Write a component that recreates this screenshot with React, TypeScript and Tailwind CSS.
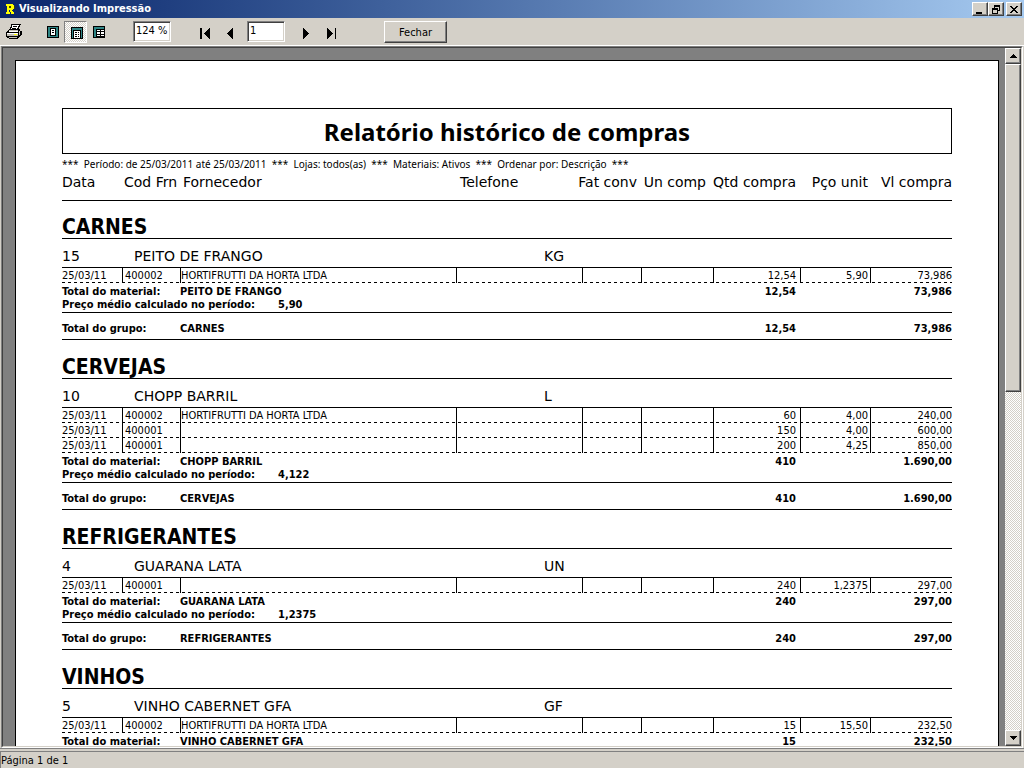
import type { ReactNode } from "react";

type Purchase = { date: string; code: string; supplier: string; qty: string; unit: string; total: string };
type Group = {
  name: string;
  id: string;
  material: string;
  measure: string;
  rows: Purchase[];
  qty: string;
  total: string;
  average?: string;
};

const groups: Group[] = [
  {
    name: "CARNES", id: "15", material: "PEITO DE FRANGO", measure: "KG",
    rows: [{ date: "25/03/11", code: "400002", supplier: "HORTIFRUTTI DA HORTA LTDA", qty: "12,54", unit: "5,90", total: "73,986" }],
    qty: "12,54", total: "73,986", average: "5,90",
  },
  {
    name: "CERVEJAS", id: "10", material: "CHOPP BARRIL", measure: "L",
    rows: [
      { date: "25/03/11", code: "400002", supplier: "HORTIFRUTTI DA HORTA LTDA", qty: "60", unit: "4,00", total: "240,00" },
      { date: "25/03/11", code: "400001", supplier: "", qty: "150", unit: "4,00", total: "600,00" },
      { date: "25/03/11", code: "400001", supplier: "", qty: "200", unit: "4,25", total: "850,00" },
    ],
    qty: "410", total: "1.690,00", average: "4,122",
  },
  {
    name: "REFRIGERANTES", id: "4", material: "GUARANA LATA", measure: "UN",
    rows: [{ date: "25/03/11", code: "400001", supplier: "", qty: "240", unit: "1,2375", total: "297,00" }],
    qty: "240", total: "297,00", average: "1,2375",
  },
  {
    name: "VINHOS", id: "5", material: "VINHO CABERNET GFA", measure: "GF",
    rows: [{ date: "25/03/11", code: "400002", supplier: "HORTIFRUTTI DA HORTA LTDA", qty: "15", unit: "15,50", total: "232,50" }],
    qty: "15", total: "232,50",
  },
];

const raised =
  "border border-t-white border-l-white border-r-[#404040] border-b-[#404040] bg-[#d4d0c8] shadow-[inset_-1px_-1px_0_#808080]";
const sunken =
  "border border-t-[#808080] border-l-[#808080] border-r-white border-b-white bg-white shadow-[inset_1px_1px_0_#404040,inset_-1px_-1px_0_#d4d0c8]";
const dither = "bg-[repeating-conic-gradient(#d4d0c8_0_25%,#fff_0_50%)] bg-[length:2px_2px]";
const wide = "font-['DejaVu_Sans',sans-serif]";

function Pixels({ w, h, children }: { w: number; h: number; children: ReactNode }) {
  return (
    <svg width={w} height={h} viewBox={`0 0 ${w} ${h}`} shapeRendering="crispEdges" aria-hidden="true">
      {children}
    </svg>
  );
}

function CaptionButton({ label, children }: { label: string; children: ReactNode }) {
  return (
    <button aria-label={label} className={`flex h-[14px] w-4 items-center justify-center ${raised}`}>
      {children}
    </button>
  );
}

function TitleBar() {
  return (
    <header className="flex h-[18px] shrink-0 items-center bg-linear-to-r from-[#0a246a] to-[#a6caf0] pr-[2px] pl-[5px]">
      <Pixels w={10} h={10}>
        <path d="M1 0h7v1h1v4H8v1H7v1h1v1h1v2H6V8H5V6H4v2h1v2H1V8h1V2H1z" fill="#ff0" />
        <path d="M4 2h2v2H4zM9 2h1v3H9z" fill="#404000" />
      </Pixels>
      <h1 className="ml-1 flex-1 text-[11px] leading-[18px] font-bold text-white">Visualizando Impressão</h1>
      <div className="flex">
        <CaptionButton label="Minimizar">
          <Pixels w={10} h={9}><path d="M1 7h6v2H1z" /></Pixels>
        </CaptionButton>
        <CaptionButton label="Restaurar">
          <Pixels w={10} h={9}>
            <path d="M3 0h6v6H7V5h1V2H4v1H3zM1 3h6v6H1zM2 5v3h4V5z" fillRule="evenodd" />
          </Pixels>
        </CaptionButton>
        <div className="w-[2px]" />
        <CaptionButton label="Fechar janela">
          <Pixels w={10} h={9}>
            <path d="M1 1h2v1h1v1h2V2h1V1h2v1H8v1H7v1H6v1h1v1h1v1h1v1H7V7H6V6H4v1H3v1H1V7h1V6h1V5h1V4H3V3H2V2H1z" />
          </Pixels>
        </CaptionButton>
      </div>
    </header>
  );
}

function PageFrame({ children }: { children: ReactNode }) {
  return (
    <Pixels w={12} h={12}>
      <path d="M0 0h12v12H0z" />
      <path d="M1 1h10v10H1z" fill="#2f8585" />
      {children}
    </Pixels>
  );
}

function PrinterIcon() {
  return (
    <Pixels w={16} h={15}>
      <path d="M5 0h10v1h-1v2h-1v2h1v1h1v1h1v4h-1v1h-1v1h-1v1h-1v1H3v-1H1v-1H0V8h1V7h1V6h1V5h1V3h1z" />
      <path d="M6 1h7v1h-1v2h-1v1H5V4h1z" fill="#fff" />
      <path d="M7 2h4v1H7zM6 4h4v1H6z" />
      <path d="M3 7h9v1H3zM1 9h11v1H1z" fill="#fff" />
      <path d="M3 6h9v1H3zM1 10h11v2H1zM13 8h1v3h-1zM3 13h8v1H3z" fill="#c0bdb5" />
      <path d="M14 6h1v1h-1zM13 7h1v1h-1z" fill="#d4d0c8" />
      <path d="M8 10h3v1H8z" fill="#ff0" />
    </Pixels>
  );
}

function Toolbar() {
  const tool = "flex h-[22px] w-[23px] items-center justify-center";
  return (
    <div className="flex h-[27px] shrink-0 items-center bg-[#d4d0c8] pl-[2px]">
      <button aria-label="Imprimir" className={tool}>
        <PrinterIcon />
      </button>
      <div className="w-4" />
      <button aria-label="Página inteira" className={tool}>
        <PageFrame>
          <path d="M3 2h6v8H3z" />
          <path d="M4 3h4v6H4z" fill="#fff" />
          <path d="M5 4h2v1H5zM5 6h2v1H5z" />
        </PageFrame>
      </button>
      <button aria-label="Largura da página" aria-pressed="true" className={`${tool} border border-t-[#808080] border-l-[#808080] border-r-white border-b-white pt-[2px] pl-[2px] ${dither}`}>
        <PageFrame>
          <path d="M2 3h8v9H2z" />
          <path d="M3 4h6v7H3z" fill="#fff" />
          <path d="M4 5h2v1H4zM7 5h1v1H7zM4 7h2v1H4zM7 7h1v1H7zM4 9h2v1H4zM7 9h1v1H7z" />
        </PageFrame>
      </button>
      <button aria-label="Zoom 100%" className={tool}>
        <PageFrame>
          <path d="M3 3h9v8H3z" />
          <path d="M4 4h3v1H4zM8 4h3v1H8zM4 6h3v2H4zM8 6h3v2H8zM4 9h3v1H4zM8 9h3v1H8z" fill="#fff" />
        </PageFrame>
      </button>
      <input aria-label="Zoom" defaultValue="124 %" className={`ml-[23px] h-[21px] w-[38px] pb-[2px] pl-[2px] text-[11px] ${sunken}`} />
      <div className="ml-[21px] flex items-center pt-1">
        <button aria-label="Primeira página" className="flex h-4 w-[26px] items-center justify-center">
          <Pixels w={10} h={11}><path d="M0 0h2v11H0zM9 0h1v11H9V10H8V9H7V8H6V7H5V6H4V5h1V4h1V3h1V2h1V1h1z" /></Pixels>
        </button>
        <button aria-label="Página anterior" className="flex h-4 w-6 items-center justify-center">
          <Pixels w={6} h={11}><path d="M5 0h1v11H5V10H4V9H3V8H2V7H1V6H0V5h1V4h1V3h1V2h1V1h1z" /></Pixels>
        </button>
      </div>
      <input aria-label="Página" defaultValue="1" className={`ml-[5px] h-[21px] w-[38px] pb-[2px] pl-[2px] text-[11px] ${sunken}`} />
      <div className="ml-2 flex items-center pt-1">
        <button aria-label="Próxima página" className="flex h-4 w-[26px] items-center justify-center">
          <Pixels w={6} h={11}><path d="M0 0h1v1h1v1h1v1h1v1h1v1h1v1H5v1H4v1H3v1H2v1H1v1H0z" /></Pixels>
        </button>
        <button aria-label="Última página" className="flex h-4 w-6 items-center justify-center">
          <Pixels w={9} h={11}><path d="M8 0h1v11H8zM0 0h1v1h1v1h1v1h1v1h1v1h1v1H5v1H4v1H3v1H2v1H1v1H0z" /></Pixels>
        </button>
      </div>
      <button className={`ml-[41px] h-[22px] w-[63px] pt-[3px] text-[11px] leading-4 ${raised}`}>Fechar</button>
    </div>
  );
}

const rule = "border-b border-black";
const bold = "text-[11px] leading-[13px] font-bold";

function GroupBody({ g }: { g: Group }) {
  return (
    <tbody>
      <tr>
        <th colSpan={9} className={`h-[38px] text-left align-bottom text-[21px] leading-[22px] font-bold [tbody+tbody_&]:h-[39px] ${rule}`}>
          {g.name}
        </th>
      </tr>
      <tr>
        <td colSpan={9} className={`h-[29px] pt-[5px] align-middle text-sm leading-5 ${wide} ${rule}`}>
          <div className="flex">
            <span className="w-[72px]">{g.id}</span>
            <span className="w-[410px]">{g.material}</span>
            <span>{g.measure}</span>
          </div>
        </td>
      </tr>
      {g.rows.map((r, i) => (
        <tr
          key={i}
          className="h-[15px] bg-[repeating-linear-gradient(90deg,#000_0_3px,transparent_3px_6px)] bg-[length:100%_1px] bg-bottom bg-no-repeat text-[11px] leading-[14px] [&>td+td]:border-l [&>td+td]:border-black"
        >
          <td>{r.date}</td>
          <td className="pl-[2px]">{r.code}</td>
          <td>{r.supplier}</td>
          <td />
          <td />
          <td />
          <td className="pr-1 text-right">{r.qty}</td>
          <td className="pr-[2px] text-right">{r.unit}</td>
          <td className="text-right">{r.total}</td>
        </tr>
      ))}
      <tr className={bold}>
        <td colSpan={2} className="pt-[2px]">Total do material:</td>
        <td colSpan={4} className="pt-[2px]">{g.material}</td>
        <td className="pt-[2px] pr-1 text-right">{g.qty}</td>
        <td />
        <td className="pt-[2px] text-right">{g.total}</td>
      </tr>
      {g.average && (
        <>
          <tr className={bold}>
            <td colSpan={9} className={`h-[15px] align-top ${rule}`}>
              <div className="flex">
                <span className="w-[216px]">Preço médio calculado no período:</span>
                <span>{g.average}</span>
              </div>
            </td>
          </tr>
          <tr className={`${bold} [&>td]:border-b [&>td]:border-black [&>td]:pt-[5px]`}>
            <td colSpan={2} className="h-[27px]">Total do grupo:</td>
            <td colSpan={4}>{g.name}</td>
            <td className="pr-1 text-right">{g.qty}</td>
            <td />
            <td className="text-right">{g.total}</td>
          </tr>
        </>
      )}
    </tbody>
  );
}

function Report() {
  return (
    <article className="min-w-0 flex-1 border border-b-0 border-black bg-white px-[46px] pt-[47px]">
      <h2 className="flex h-[46px] items-center justify-center border border-black pt-px font-['Noto_Sans',sans-serif] text-2xl font-bold">
        Relatório histórico de compras
      </h2>
      <p className="h-[18px] pt-[3px] font-['Noto_Sans',sans-serif] text-[10px] leading-[14px] whitespace-pre">
        {"***  Período: de 25/03/2011 até 25/03/2011  ***  Lojas: todos(as)  ***  Materiais: Ativos  ***  Ordenar por: Descrição  ***"}
      </p>
      <table className="w-full table-fixed border-separate border-spacing-0 whitespace-nowrap">
        <colgroup>
          <col className="w-[60px]" />
          <col className="w-[58px]" />
          <col />
          <col className="w-[126px]" />
          <col className="w-[59px]" />
          <col className="w-[72px]" />
          <col className="w-[87px]" />
          <col className="w-[70px]" />
          <col className="w-[82px]" />
        </colgroup>
        <thead>
          <tr className={`text-sm leading-5 ${wide} [&>th]:border-b [&>th]:border-black [&>th]:align-top [&>th]:font-normal`}>
            <th className="h-[29px] text-left">Data</th>
            <th className="pl-[2px] text-left">Cod Frn</th>
            <th className="pl-[3px] text-left">Fornecedor</th>
            <th className="pl-1 text-left">Telefone</th>
            <th className="pr-1"><div className="flex justify-end">Fat conv</div></th>
            <th className="pr-[7px]"><div className="flex justify-end">Un comp</div></th>
            <th className="pr-1 text-right">Qtd compra</th>
            <th className="pr-[2px] text-right">Pço unit</th>
            <th className="text-right">Vl compra</th>
          </tr>
        </thead>
        {groups.map((g) => (
          <GroupBody key={g.name} g={g} />
        ))}
      </table>
    </article>
  );
}

function ScrollBar() {
  return (
    <div className={`flex w-4 shrink-0 flex-col ${dither}`}>
      <button aria-label="Rolar para cima" className={`flex h-4 items-center justify-center ${raised}`}>
        <Pixels w={7} h={4}><path d="M3 0h1v1h1v1h1v1h1v1H0V3h1V2h1V1h1z" /></Pixels>
      </button>
      <div className={`h-[47%] ${raised}`} />
      <div className="flex-1" />
      <button aria-label="Rolar para baixo" className={`flex h-4 items-center justify-center ${raised}`}>
        <Pixels w={7} h={4}><path d="M0 0h7v1H6v1H5v1H4v1H3V3H2V2H1V1H0z" /></Pixels>
      </button>
    </div>
  );
}

export default function App() {
  return (
    <div className="flex h-screen flex-col overflow-hidden bg-[#d4d0c8] font-['DejaVu_Sans_Condensed','DejaVu_Sans',sans-serif] text-black">
      <TitleBar />
      <Toolbar />
      <div className="flex min-h-0 flex-1 border-y border-t-white border-b-[#808080] px-px">
        <main className="flex min-h-0 flex-1 border border-t-[#808080] border-r-white border-b-white border-l-[#808080]">
          <div className="flex min-h-0 flex-1 border border-t-[#404040] border-r-[#d4d0c8] border-b-[#d4d0c8] border-l-[#404040]">
            <div className="flex min-h-0 min-w-0 flex-1 overflow-hidden bg-[#808080] pt-3 pr-[6px] pl-3">
              <Report />
            </div>
            <ScrollBar />
          </div>
        </main>
      </div>
      <footer className="mt-[2px] h-[17px] shrink-0 border-t border-l border-[#808080] text-[11px] leading-[17px]">Página 1 de 1</footer>
    </div>
  );
}
